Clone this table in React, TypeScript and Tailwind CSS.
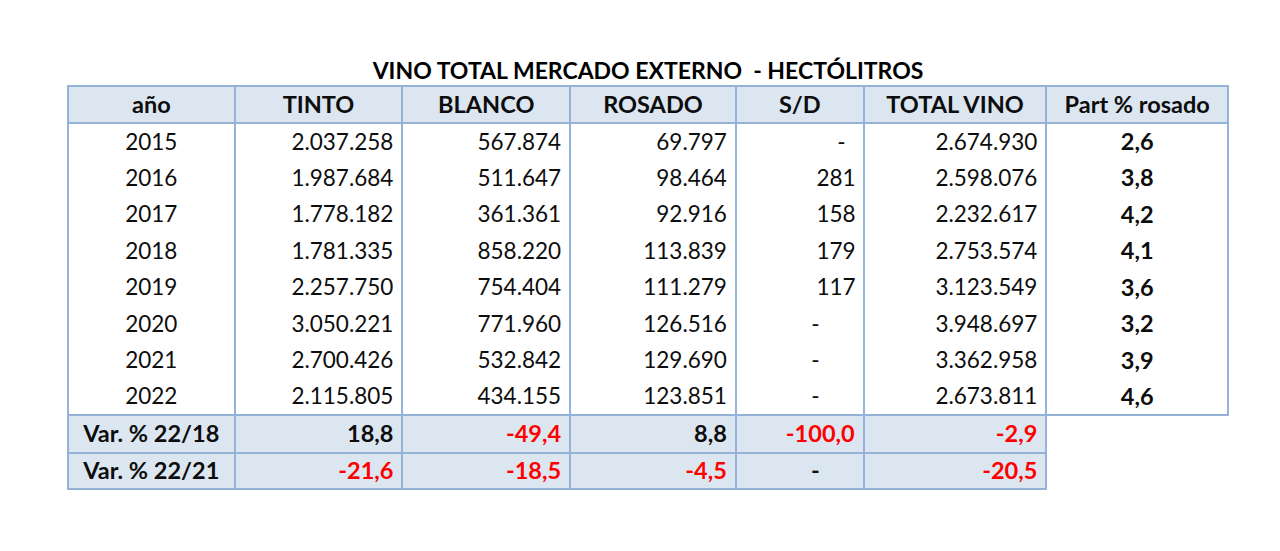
const rows = [
  { y: '2015', t: '2.037.258', b: '567.874', r: '69.797', sd: '-', sdPad: 'pr-[17px]', tot: '2.674.930', p: '2,6' },
  { y: '2016', t: '1.987.684', b: '511.647', r: '98.464', sd: '281', sdPad: 'pr-[7px]', tot: '2.598.076', p: '3,8' },
  { y: '2017', t: '1.778.182', b: '361.361', r: '92.916', sd: '158', sdPad: 'pr-[7px]', tot: '2.232.617', p: '4,2' },
  { y: '2018', t: '1.781.335', b: '858.220', r: '113.839', sd: '179', sdPad: 'pr-[7px]', tot: '2.753.574', p: '4,1' },
  { y: '2019', t: '2.257.750', b: '754.404', r: '111.279', sd: '117', sdPad: 'pr-[7px]', tot: '3.123.549', p: '3,6' },
  { y: '2020', t: '3.050.221', b: '771.960', r: '126.516', sd: '-', sdPad: 'pr-[43px]', tot: '3.948.697', p: '3,2' },
  { y: '2021', t: '2.700.426', b: '532.842', r: '129.690', sd: '-', sdPad: 'pr-[43px]', tot: '3.362.958', p: '3,9' },
  { y: '2022', t: '2.115.805', b: '434.155', r: '123.851', sd: '-', sdPad: 'pr-[43px]', tot: '2.673.811', p: '4,6' },
]

const vars = [
  {
    label: 'Var. % 22/18',
    h: 'h-[38px]',
    cells: [
      { v: '18,8', red: false },
      { v: '-49,4', red: true },
      { v: '8,8', red: false },
      { v: '-100,0', red: true },
      { v: '-2,9', red: true },
    ],
  },
  {
    label: 'Var. % 22/21',
    h: 'h-[36px]',
    cells: [
      { v: '-21,6', red: true },
      { v: '-18,5', red: true },
      { v: '-4,5', red: true },
      { v: '-', red: false, dash: true },
      { v: '-20,5', red: true },
    ],
  },
]

const headers = ['año', 'TINTO', 'BLANCO', 'ROSADO', 'S/D', 'TOTAL VINO', 'Part % rosado']

export default function App() {
  return (
    <div className="min-h-[551px] bg-white pt-[56px] pl-[67px] text-[#0d0d0d] [font-family:Lato,'Open_Sans',sans-serif]">
      <div className="w-[1162px]">
        <h1 className="text-center text-[23px] leading-[29px] font-bold text-black">
          VINO TOTAL MERCADO EXTERNO&nbsp;&nbsp;- HECTÓLITROS
        </h1>
        <table className="table-fixed border-collapse text-[22.5px]">
          <colgroup>
            <col className="w-[167px]" />
            <col className="w-[168px]" />
            <col className="w-[168px]" />
            <col className="w-[166px]" />
            <col className="w-[128px]" />
            <col className="w-[183px]" />
            <col className="w-[182px]" />
          </colgroup>
          <thead>
            <tr className="h-[37px] bg-[#dce6f1]">
              {headers.map((h) => (
                <th key={h} className="border-2 border-[#95b3d7] p-0 text-center text-[23.5px] font-bold leading-none">
                  {h}
                </th>
              ))}
            </tr>
          </thead>
          <tbody>
            {rows.map((r, i) => {
              const last = i === rows.length - 1
              const cell = `border-x-2 border-[#95b3d7] p-0 leading-none ${last ? 'border-b-2' : ''}`
              return (
                <tr key={r.y} className="h-[36.5px]">
                  <td className={`${cell} text-center`}>{r.y}</td>
                  <td className={`${cell} pr-2 text-right`}>{r.t}</td>
                  <td className={`${cell} pr-2 text-right`}>{r.b}</td>
                  <td className={`${cell} pr-2 text-right`}>{r.r}</td>
                  <td className={`${cell} ${r.sdPad} text-right`}>{r.sd}</td>
                  <td className={`${cell} pr-2 text-right`}>{r.tot}</td>
                  <td className={`${cell} text-center text-[23.5px] font-bold`}>{r.p}</td>
                </tr>
              )
            })}
            {vars.map((v) => (
              <tr key={v.label} className={v.h}>
                <td className="border-2 border-[#95b3d7] bg-[#dce6f1] p-0 text-center text-[23.5px] font-bold leading-none">
                  {v.label}
                </td>
                {v.cells.map((c, j) => (
                  <td
                    key={j}
                    className={`border-2 border-[#95b3d7] bg-[#dce6f1] p-0 text-[23.5px] font-bold leading-none ${
                      c.red ? 'text-[#f00]' : 'text-[#0d0d0d]'
                    } ${c.dash ? 'pr-[43px] text-right' : 'pr-2 text-right'}`}
                  >
                    {c.v}
                  </td>
                ))}
                <td className="border-0 p-0" />
              </tr>
            ))}
          </tbody>
        </table>
      </div>
    </div>
  )
}
